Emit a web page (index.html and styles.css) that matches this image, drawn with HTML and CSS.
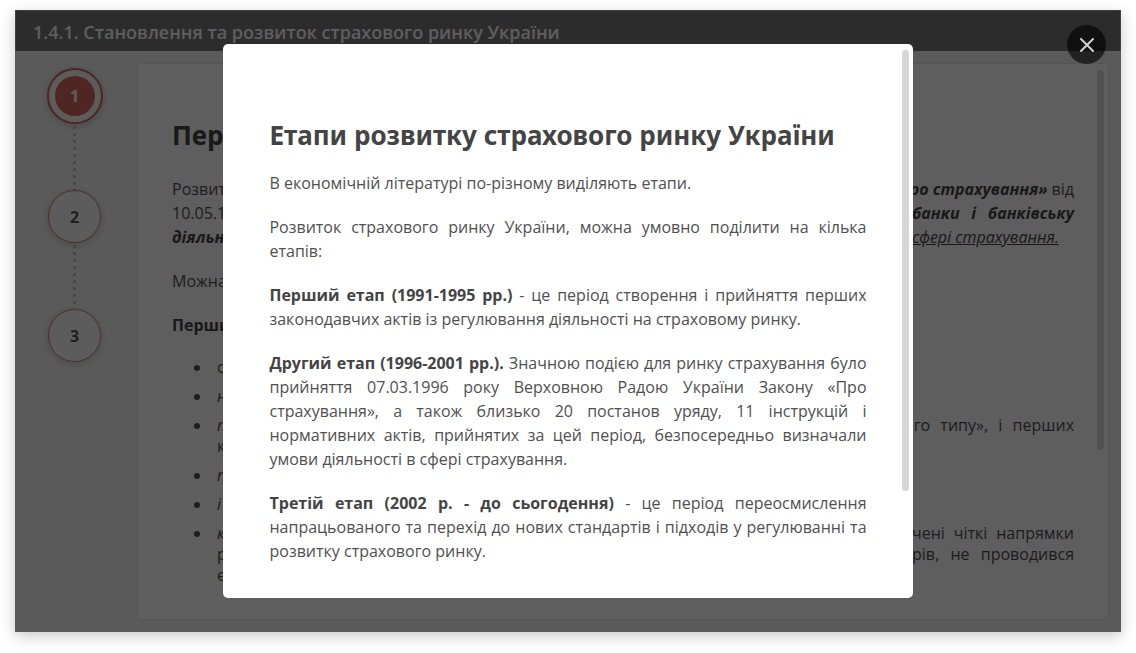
FILE: index.html
```html
<!DOCTYPE html>
<html lang="uk">
<head>
<meta charset="utf-8">
<title>Становлення та розвиток страхового ринку України</title>
<link rel="stylesheet" href="styles.css">
</head>
<body>
<main class="window">
  <header class="topbar"><h1 class="topbar-title">1.4.1. Становлення та розвиток страхового ринку України</h1></header>
  <div class="workspace">
    <nav class="steps" aria-label="Кроки">
      <button class="step step-active" type="button"><span class="step-core">1</span></button>
      <span class="dots"></span>
      <button class="step" type="button">2</button>
      <span class="dots"></span>
      <button class="step" type="button">3</button>
    </nav>
    <article class="panel">
      <h2 class="panel-title">Перший</h2>
      <div class="intro">
        <p class="line"><span>Розвиток</span><span><b><i>«Про страхування»</i></b> від</span></p>
        <p class="line"><span>10.05.1993</span><b class="tail"><i>банки і банківську</i></b></p>
        <p class="line"><b><i>діяльність»</i></b><i class="under"><u>сфері страхування.</u></i></p>
      </div>
      <p class="line spaced">Можна</p>
      <p class="line spaced"><b>Перший</b></p>
      <ul class="points">
        <li>с</li>
        <li><i>н</i></li>
        <li><div class="line"><i>п</i><span class="tail tail-wide">ого типу», і перших</span></div>к</li>
        <li><i>п</i></li>
        <li><i>і</i></li>
        <li><div class="line"><i>к</i><span class="tail">чені чіткі напрямки</span></div><div class="line"><span>р</span><span class="tail">рів, не проводився</span></div>е</li>
      </ul>
      <span class="thumb panel-thumb"></span>
    </article>
  </div>
  <div class="overlay">
    <section class="dialog" role="dialog" aria-labelledby="dialog-title">
      <h2 class="dialog-title" id="dialog-title">Етапи розвитку страхового ринку України</h2>
      <p>В економічній літературі по-різному виділяють етапи.</p>
      <p>Розвиток страхового ринку України, можна умовно поділити на кілька етапів:</p>
      <p><b>Перший етап (1991-1995 рр.)</b> - це період створення і прийняття перших законодавчих актів із регулювання діяльності на страховому ринку.</p>
      <p><b>Другий етап (1996-2001 рр.).</b> Значною подією для ринку страхування було прийняття 07.03.1996 року Верховною Радою України Закону «Про страхування», а також близько 20 постанов уряду, 11 інструкцій і нормативних актів, прийнятих за цей період, безпосередньо визначали умови діяльності в сфері страхування.</p>
      <p><b>Третій етап (2002 р. - до сьогодення)</b> - це період переосмислення напрацьованого та перехід до нових стандартів і підходів у регулюванні та розвитку страхового ринку.</p>
      <span class="thumb dialog-thumb"></span>
    </section>
    <button class="close" type="button" aria-label="Закрити">
      <svg width="16" height="16" viewBox="0 0 16 16" fill="none" stroke="#d0d0d0" stroke-width="2" stroke-linecap="round"><path d="M2 2 14 14M14 2 2 14"/></svg>
    </button>
  </div>
</main>
</body>
</html>
```
FILE: styles.css
```css
* { box-sizing: border-box; }
body {
  margin: 0;
  padding: 10px 15px 21px;
  min-height: 100vh;
  display: flex;
  background: #fff;
  color: #505050;
  font: 16px/24px "Open Sans", "Noto Sans", sans-serif;
}
h1, h2, p, ul { margin: 0; }
button { font: inherit; padding: 0; cursor: pointer; }
b { color: #444; }
.window {
  position: relative;
  flex: 1;
  display: flex;
  flex-direction: column;
  background: #f5f5f5;
  box-shadow: 0 4px 14px rgba(0, 0, 0, .22);
}
.topbar { padding: 9px 17px 7px; border: 1px solid #b0b0b0; border-bottom: 0; background: #777; }
.topbar-title { font: 600 18px/24px "Open Sans", "Noto Sans", sans-serif; color: #fff; }
.workspace { flex: 1; display: flex; padding: 12px 12px 12px 32px; gap: 35px; }
.steps { display: flex; flex-direction: column; align-items: center; width: 55px; padding-top: 5px; }
.step {
  display: flex;
  align-items: center;
  justify-content: center;
  width: 53px;
  height: 53px;
  border: 1px solid #d9776c;
  border-radius: 50%;
  background: #fafafa;
  color: #555;
  font-weight: bold;
  box-shadow: 0 2px 8px rgba(0, 0, 0, .2);
}
.step-active { width: 56px; height: 56px; border: 2px solid #d0655a; }
.step-core {
  width: 40px;
  height: 40px;
  border-radius: 50%;
  background: #d9695c;
  color: #fff;
  line-height: 40px;
}
.dots {
  width: 3px;
  height: 66px;
  background: radial-gradient(circle, #bbb 1px, transparent 2px) 0 0 / 3px 7px;
}
.panel {
  position: relative;
  flex: 1;
  padding: 53px 34px 0;
  border: 1px solid #e6e6e6;
  border-radius: 5px;
  background: #fff;
}
.panel-title { font: bold 26px/36px "Noto Sans", sans-serif; color: #444; }
.intro { margin-top: 24px; }
.line { display: flex; justify-content: space-between; }
.spaced { margin-top: 20px; }
.tail { width: 162px; text-align: justify; text-align-last: justify; }
.tail-wide { width: 170px; }
.under { padding-right: 15px; color: #444; }
.points { margin-top: 20px; padding-left: 40px; line-height: 21px; }
.points li { padding-left: 5px; }
.points li + li { margin-top: 8px; }
.thumb { position: absolute; width: 7px; border-radius: 4px; }
.panel-thumb { top: 6px; right: 4px; height: 380px; background: #dadada; }
.overlay {
  position: absolute;
  inset: 0;
  display: flex;
  align-items: center;
  justify-content: center;
  background: rgba(0, 0, 0, .63);
}
.dialog {
  position: relative;
  width: 62.3%;
  padding: 73px 46px 35px;
  border-radius: 5px;
  background: #fff;
  text-align: justify;
}
.dialog-title { margin-bottom: 18px; font: bold 26px/36px "Noto Sans", sans-serif; color: #444; text-align: left; }
.dialog p + p { margin-top: 20px; }
.dialog-thumb { top: 6px; right: 4px; height: 441px; background: #d6d6d6; }
.close {
  position: absolute;
  top: 15px;
  right: 15px;
  width: 39px;
  height: 39px;
  display: flex;
  align-items: center;
  justify-content: center;
  border: 0;
  border-radius: 50%;
  background: rgba(0, 0, 0, .62);
}
```
